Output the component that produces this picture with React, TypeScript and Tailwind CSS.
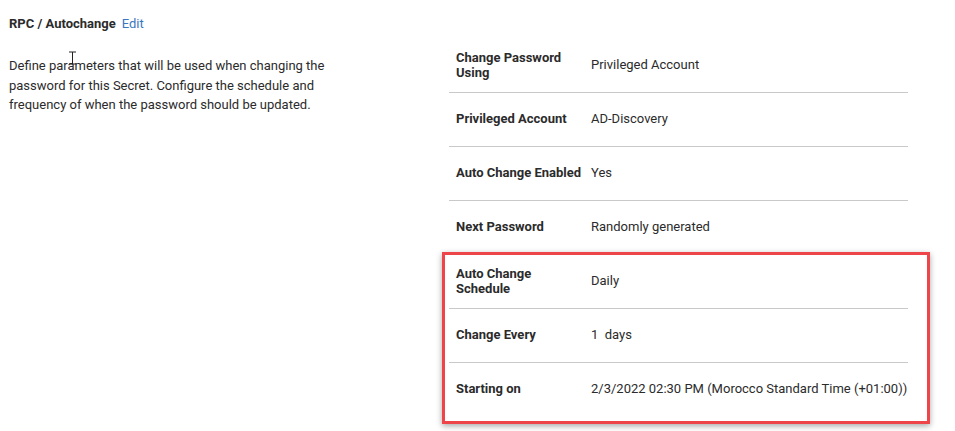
import React from "react";

const rows = [
  { label: "Change Password Using", value: "Privileged Account" },
  { label: "Privileged Account", value: "AD-Discovery" },
  { label: "Auto Change Enabled", value: "Yes" },
  { label: "Next Password", value: "Randomly generated" },
];

const scheduleRows = [
  { label: "Auto Change Schedule", value: "Daily" },
  { label: "Change Every", value: "1\u00a0\u00a0days" },
  { label: "Starting on", value: "2/3/2022 02:30 PM (Morocco Standard Time (+01:00))" },
];

function Row({ label, value, last }: { label: string; value: string; last?: boolean }) {
  return (
    <div
      className={`flex items-center pl-[7px] pb-[2px] ${last ? "h-[52px]" : "h-[54px] border-b border-[#c9c9c9]"}`}
    >
      <div className="w-[135px] pr-[6px] font-bold leading-[15px]">{label}</div>
      <div className="leading-[15px]">{value}</div>
    </div>
  );
}

export default function App() {
  return (
    <div
      className="relative w-[955px] h-[431px] bg-white text-[13px] text-[#2b2b2b] overflow-hidden"
      style={{ fontFamily: "Roboto, 'Noto Sans', sans-serif" }}
    >
      <div className="flex pl-[9px]">
        {/* Description */}
        <div className="w-[440px] shrink-0 pt-[14px]">
          <div className="leading-[20px]">
            <span className="font-bold">RPC / Autochange</span>
            <span className="ml-[6px] text-[#3b76c0]">Edit</span>
          </div>
          <p className="mt-[22px] w-[330px] leading-[19.5px]">
            Define parameters that will be used when changing the password for this Secret.
            Configure the schedule and frequency of when the password should be updated.
          </p>
        </div>

        {/* Settings table */}
        <div className="w-[459px] pt-[39px]">
          {rows.map((r) => (
            <Row key={r.label} label={r.label} value={r.value} />
          ))}
          <div className="-ml-[7px] -mr-[22px] -mt-[3px] border-[3px] border-[#ee454b] pl-[4px] pr-[19px] pb-[6px] shadow-[0_2px_6px_rgba(0,0,0,0.35)]">
            {scheduleRows.map((r, i) => (
              <Row key={r.label} label={r.label} value={r.value} last={i === scheduleRows.length - 1} />
            ))}
          </div>
        </div>
      </div>

      {/* text cursor */}
      <svg className="absolute left-[68px] top-[51px]" width="9" height="14" viewBox="0 0 9 14">
        <path d="M1 1h7M4.5 1v12M1 13h7" stroke="#222" strokeWidth="1" fill="none" />
      </svg>
    </div>
  );
}
